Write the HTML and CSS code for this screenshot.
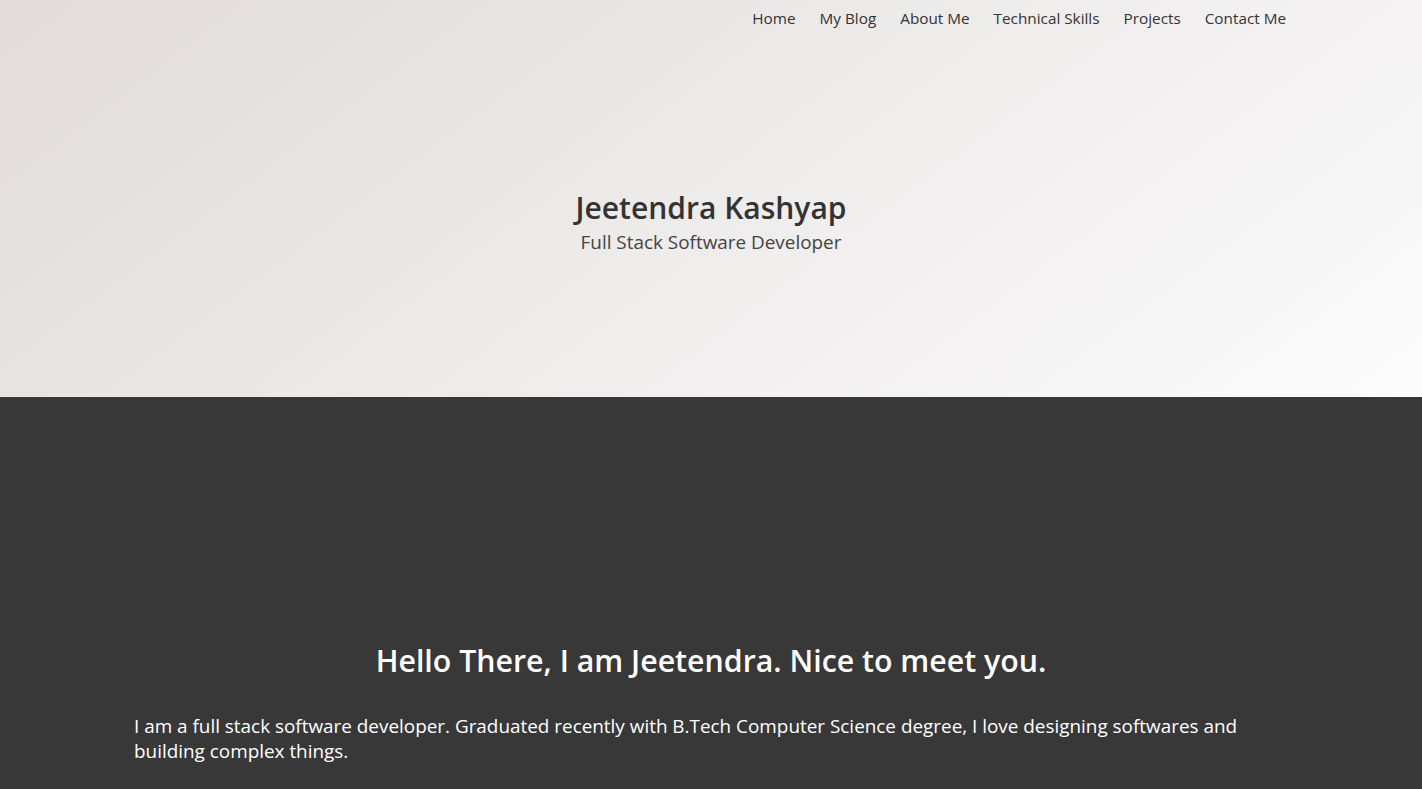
FILE: index.html
```html
<!DOCTYPE html>
<html lang="en">
<head>
<meta charset="utf-8">
<title>Jeetendra Kashyap</title>
<link rel="stylesheet" href="styles.css">
</head>
<body>
<header class="hero">
  <nav class="nav">
    <a href="#">Home</a>
    <a href="#">My Blog</a>
    <a href="#">About Me</a>
    <a href="#">Technical Skills</a>
    <a href="#">Projects</a>
    <a href="#">Contact Me</a>
  </nav>
  <div class="intro">
    <h1 class="name">Jeetendra Kashyap</h1>
    <p class="role">Full Stack Software Developer</p>
  </div>
</header>
<section class="about">
  <div class="container">
    <h2 class="greet">Hello There, I am Jeetendra. Nice to meet you.</h2>
    <p class="bio">I am a full stack software developer. Graduated recently with B.Tech Computer Science degree, I love designing softwares and building complex things.</p>
  </div>
</section>
</body>
</html>
```
FILE: styles.css
```css
html, body {
  margin: 0;
  padding: 0;
}
body {
  font-family: "Open Sans", "Noto Sans", sans-serif;
  background: #383838;
  overflow: hidden;
}
.hero {
  height: 397px;
  background: linear-gradient(143deg, #e1dbdb 0%, #eeebeb 50%, #fcfcfc 100%);
  display: flex;
  flex-direction: column;
}
.nav {
  display: flex;
  justify-content: flex-end;
  gap: 24px;
  padding: 7px 136px 0 0;
  height: 22px;
}
.nav a {
  color: #333;
  text-decoration: none;
  font-size: 15.3px;
  line-height: 22px;
}
.intro {
  text-align: center;
  padding-top: 160px;
}
.name {
  margin: 0;
  font-size: 30px;
  font-weight: 600;
  color: #333;
  line-height: 38px;
}
.role {
  margin: 2px 0 0;
  font-size: 18.9px;
  color: #444;
  line-height: 26px;
}
.about {
  background: #383838;
  color: #fff;
  padding-top: 242px;
}
.container {
  width: 1154px;
  margin: 0 auto;
}
.greet {
  margin: 0;
  text-align: center;
  font-size: 30.3px;
  font-weight: 600;
  line-height: 44px;
}
.bio {
  margin: 31px 0 0;
  font-size: 18.9px;
  line-height: 25px;
}
```
